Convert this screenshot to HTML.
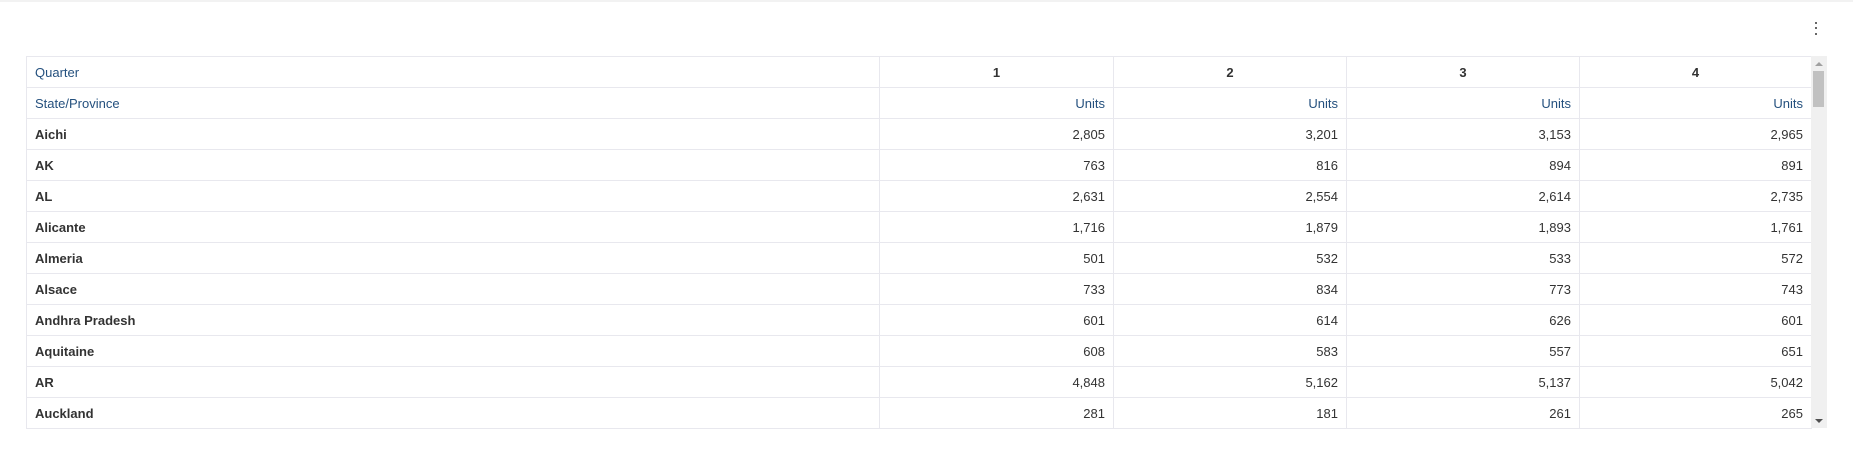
<!DOCTYPE html>
<html><head><meta charset="utf-8"><style>
*{box-sizing:border-box;margin:0;padding:0}
body{width:1853px;height:449px;background:#fff;font-family:"Liberation Sans",Arial,sans-serif;font-size:13px;position:relative;overflow:hidden}
.topline{position:absolute;left:0;top:0;width:1853px;height:2px;background:#f2f2f2}
.dot{position:absolute;left:1815px;width:2px;height:2px;background:#666}
table{position:absolute;left:26px;top:56px;border-collapse:collapse;table-layout:fixed}
td{height:31px;border:1px solid #e8e8ee;padding:0 8px;white-space:nowrap;color:#333}
td.n{text-align:right}
td.h{color:#24507e}
td.c{text-align:center;font-weight:bold;color:#333}
td.b{font-weight:bold}
.sb{position:absolute;left:1811px;top:56px;width:16px;height:372px;background:#f0f0f0}
.thumb{position:absolute;left:2px;top:15px;width:11px;height:36px;background:#c1c1c1}
.up{position:absolute;left:4px;top:6px;width:0;height:0;border-left:4px solid transparent;border-right:4px solid transparent;border-bottom:4px solid #a0a0a0}
.dn{position:absolute;left:4px;top:363px;width:0;height:0;border-left:4px solid transparent;border-right:4px solid transparent;border-top:4px solid #505050}
</style></head><body>
<div class="topline"></div>
<div class="dot" style="top:22px"></div><div class="dot" style="top:27px"></div><div class="dot" style="top:33px"></div>
<table>
<colgroup><col style="width:853px"><col style="width:234px"><col style="width:233px"><col style="width:233px"><col style="width:232px"></colgroup>
<tr><td class="h">Quarter</td><td class="c">1</td><td class="c">2</td><td class="c">3</td><td class="c">4</td></tr>
<tr><td class="h">State/Province</td><td class="n h">Units</td><td class="n h">Units</td><td class="n h">Units</td><td class="n h">Units</td></tr>
<tr><td class="b">Aichi</td><td class="n">2,805</td><td class="n">3,201</td><td class="n">3,153</td><td class="n">2,965</td></tr>
<tr><td class="b">AK</td><td class="n">763</td><td class="n">816</td><td class="n">894</td><td class="n">891</td></tr>
<tr><td class="b">AL</td><td class="n">2,631</td><td class="n">2,554</td><td class="n">2,614</td><td class="n">2,735</td></tr>
<tr><td class="b">Alicante</td><td class="n">1,716</td><td class="n">1,879</td><td class="n">1,893</td><td class="n">1,761</td></tr>
<tr><td class="b">Almeria</td><td class="n">501</td><td class="n">532</td><td class="n">533</td><td class="n">572</td></tr>
<tr><td class="b">Alsace</td><td class="n">733</td><td class="n">834</td><td class="n">773</td><td class="n">743</td></tr>
<tr><td class="b">Andhra Pradesh</td><td class="n">601</td><td class="n">614</td><td class="n">626</td><td class="n">601</td></tr>
<tr><td class="b">Aquitaine</td><td class="n">608</td><td class="n">583</td><td class="n">557</td><td class="n">651</td></tr>
<tr><td class="b">AR</td><td class="n">4,848</td><td class="n">5,162</td><td class="n">5,137</td><td class="n">5,042</td></tr>
<tr><td class="b">Auckland</td><td class="n">281</td><td class="n">181</td><td class="n">261</td><td class="n">265</td></tr>
</table>
<div class="sb"><div class="up"></div><div class="thumb"></div><div class="dn"></div></div>
</body></html>
